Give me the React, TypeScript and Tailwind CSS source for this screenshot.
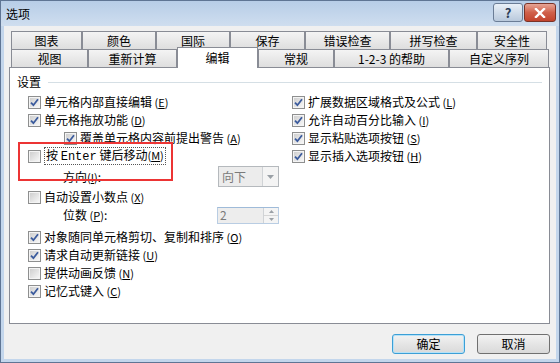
import type { ReactNode } from 'react';

type Tab = { label: string; w: number; active?: boolean };

const row1: Tab[] = [
  { label: '图表', w: 71 },
  { label: '颜色', w: 74 },
  { label: '国际', w: 74 },
  { label: '保存', w: 75 },
  { label: '错误检查', w: 85 },
  { label: '拼写检查', w: 87 },
  { label: '安全性', w: 70 },
];

const row2: Tab[] = [
  { label: '视图', w: 77 },
  { label: '重新计算', w: 89 },
  { label: '编辑', w: 81, active: true },
  { label: '常规', w: 76 },
  { label: '1-2-3 的帮助', w: 115 },
  { label: '自定义序列', w: 100 },
];

const Check = ({ on }: { on?: boolean }) => (
  <div className="w-[13px] h-[13px] shrink-0 border border-[#8e8f8f] bg-[#f4f4f4] p-px">
    <div className="w-full h-full bg-linear-to-br from-[#cfcfcf] to-[#f6f6f6] flex items-center justify-center">
      {on && (
        <svg width="9" height="9" viewBox="0 0 9 9">
          <path d="M1 4.6 L3.4 7.2 L8 1.2" fill="none" stroke="#3b5b9d" strokeWidth="1.8" />
        </svg>
      )}
    </div>
  </div>
);

const Key = ({ k, space = true }: { k: string; space?: boolean }) => (
  <span className="text-[11px]">
    {space ? ' ' : ''}(<span className="underline">{k}</span>)
  </span>
);

const Item = ({ on, children, indent = 0 }: { on?: boolean; children: ReactNode; indent?: number }) => (
  <div className="h-[18px] flex items-center" style={{ paddingLeft: indent }}>
    <Check on={on} />
    <span className="ml-[3px] whitespace-nowrap">{children}</span>
  </div>
);

const TabBtn = ({ t }: { t: Tab }) =>
  t.active ? (
    <div
      className="relative z-10 h-[21px] -mb-px border border-b-0 border-[#898c95] bg-white flex items-center justify-center"
      style={{ width: t.w }}
    >
      {t.label}
    </div>
  ) : (
    <div
      className="h-[18px] border border-b-0 border-[#898c95] bg-linear-to-b from-[#f4f4f4] to-[#dedede] flex items-center justify-center"
      style={{ width: t.w }}
    >
      {t.label}
    </div>
  );

export default function App() {
  return (
    <div className="w-[560px] h-[363px] border border-[#5f7594] bg-[#c3d6ec] flex flex-col font-['Noto_Sans_CJK_SC',sans-serif] text-[12px] leading-[14px] text-black">
      {/* title bar */}
      <div className="h-[25px] flex items-center justify-between pl-[5px] pr-[3px] bg-linear-to-b from-[#b7cde7] to-[#cfdeef]">
        <span className="text-[12px]">选项</span>
        <div className="flex gap-px -mt-[2px]">
          <div className="w-[30px] h-[19px] rounded-[3px] border border-[#6b7d96] bg-linear-to-b from-[#e9f0f8] to-[#b9c9dc] flex items-center justify-center text-[13px] font-bold text-[#2c3e58]">
            ?
          </div>
          <div className="w-[32px] h-[19px] rounded-[3px] border border-[#7a3327] bg-linear-to-b from-[#e6a596] via-[#d0604a] to-[#c2432c] flex items-center justify-center">
            <svg width="12" height="10" viewBox="0 0 12 10">
              <path d="M2 1 L10 9 M10 1 L2 9" stroke="#fff" strokeWidth="2.4" strokeLinecap="square" />
            </svg>
          </div>
        </div>
      </div>

      {/* client */}
      <div className="flex-1 mx-[3px] mb-[3px] bg-[#f0f0f0] pl-[5px] pr-[6px] pt-[5px] flex flex-col">
        <div className="ml-[2px] flex">
          {row1.map((t) => (
            <TabBtn key={t.label} t={t} />
          ))}
        </div>
        <div className="ml-[2px] flex items-end h-[18px]">
          {row2.map((t) => (
            <TabBtn key={t.label} t={t} />
          ))}
        </div>

        <div className="relative h-[257px] border border-[#898c95] bg-white">
          <div className="flex items-center pl-[7px] pr-[7px] pt-[7px]">
            <span>设置</span>
            <div className="flex-1 h-px bg-[#d5dfe5] ml-[7px] mt-px" />
          </div>

          <div className="flex mt-[4px] pl-[18px]">
            <div className="w-[264px] flex flex-col">
              <Item on>
                单元格内部直接编辑<Key k="E" />
              </Item>
              <Item on>
                单元格拖放功能<Key k="D" />
              </Item>
              <Item on indent={36}>
                覆盖单元格内容前提出警告<Key k="A" />
              </Item>
              <div className="h-[18px] flex items-center">
                <Check />
                <span className="ml-[3px] px-px border border-dotted border-[#555] whitespace-nowrap leading-[14px]">
                  按 <span className="font-['Liberation_Mono',monospace] text-[12px]">Enter</span> 键后移动<Key k="M" space={false} />
                </span>
              </div>
              <div className="h-[21px] mt-px flex items-center">
                <span className="ml-[35px] w-[155px]">
                  方向<Key k="I" space={false} />:
                </span>
                <div className="w-[61px] h-[21px] border border-[#b5b9bd] bg-[#ececec] flex items-center">
                  <span className="flex-1 pl-[3px] text-[#7a7a7a]">向下</span>
                  <div className="w-[16px] h-full border-l border-[#d0d3d6] bg-[#f4f4f4] flex items-center justify-center">
                    <svg width="7" height="4" viewBox="0 0 7 4">
                      <path d="M0 0 H7 L3.5 4 Z" fill="#9aa0a6" />
                    </svg>
                  </div>
                </div>
              </div>
              <div className="mt-px">
                <Item>
                  自动设置小数点<Key k="X" />
                </Item>
              </div>
              <div className="h-[18px] flex items-center">
                <span className="ml-[35px] w-[154px]">
                  位数<Key k="P" />:
                </span>
                <div className="w-[62px] h-[17px] border border-[#b9cde3] border-t-[#9fbbd9] bg-[#ededed] flex items-center">
                  <span className="flex-1 pl-[2px] text-[#7a7a7a]">2</span>
                  <div className="w-[15px] h-full flex flex-col border-l border-[#d0d3d6] bg-[#f4f4f4]">
                    <div className="flex-1 flex items-center justify-center border-b border-[#d6d6d6]">
                      <svg width="5" height="3" viewBox="0 0 5 3">
                        <path d="M0 3 H5 L2.5 0 Z" fill="#9aa0a6" />
                      </svg>
                    </div>
                    <div className="flex-1 flex items-center justify-center">
                      <svg width="5" height="3" viewBox="0 0 5 3">
                        <path d="M0 0 H5 L2.5 3 Z" fill="#9aa0a6" />
                      </svg>
                    </div>
                  </div>
                </div>
              </div>
              <div className="mt-[4px]">
                <Item on>
                  对象随同单元格剪切、复制和排序<Key k="O" />
                </Item>
                <Item on>
                  请求自动更新链接<Key k="U" />
                </Item>
                <Item>
                  提供动画反馈<Key k="N" />
                </Item>
                <Item on>
                  记忆式键入<Key k="C" />
                </Item>
              </div>
            </div>

            <div className="flex flex-col">
              <Item on>
                扩展数据区域格式及公式<Key k="L" />
              </Item>
              <Item on>
                允许自动百分比输入<Key k="I" />
              </Item>
              <Item on>
                显示粘贴选项按钮<Key k="S" />
              </Item>
              <Item on>
                显示插入选项按钮<Key k="H" />
              </Item>
            </div>
          </div>

          {/* annotation */}
          <div className="absolute left-[8px] top-[74px] w-[155px] h-[39px] border-2 border-[#ec3434]" />
        </div>

        <div className="flex justify-end gap-[12px] mt-[10px]">
          <div className="w-[73px] h-[20px] rounded-[3px] border border-[#3c9fd6] bg-linear-to-b from-[#f2f2f2] to-[#d9d9d9] shadow-[inset_0_0_0_1px_#b5e2f8] flex items-center justify-center">
            确定
          </div>
          <div className="w-[73px] h-[20px] rounded-[3px] border border-[#707070] bg-linear-to-b from-[#f2f2f2] to-[#d9d9d9] flex items-center justify-center">
            取消
          </div>
        </div>
      </div>
    </div>
  );
}
